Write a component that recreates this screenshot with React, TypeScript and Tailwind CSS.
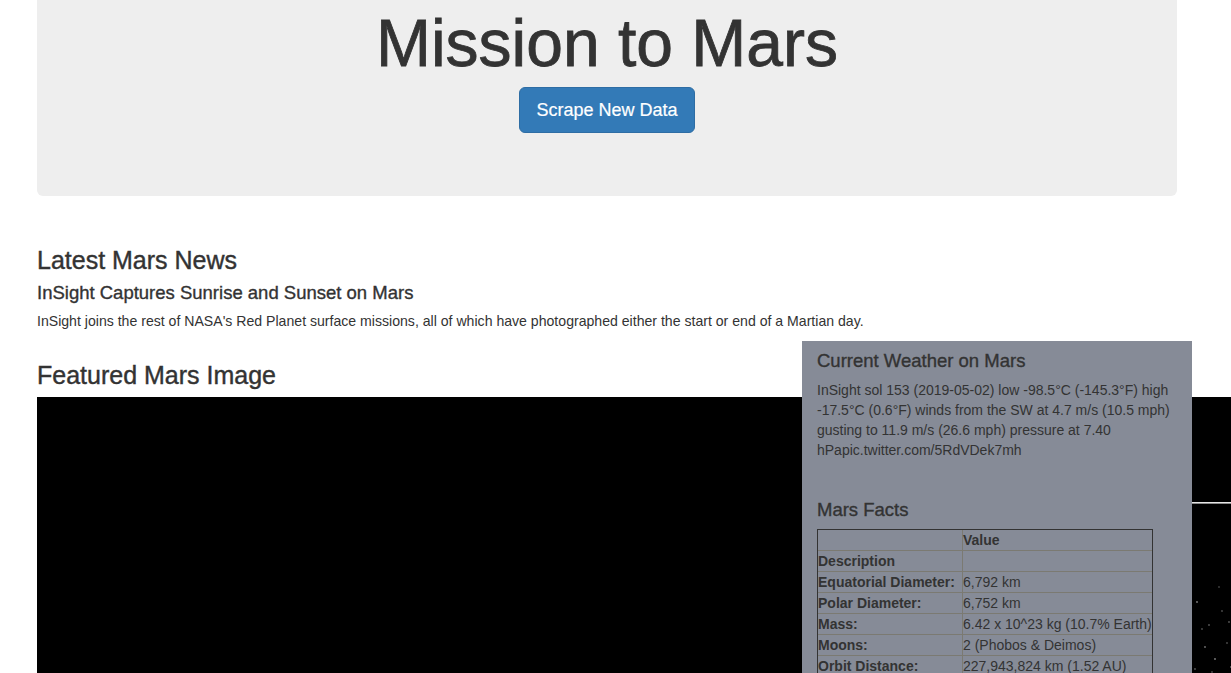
import React from 'react';

const facts: [string, string][] = [
  ['Description', ''],
  ['Equatorial Diameter:', '6,792 km'],
  ['Polar Diameter:', '6,752 km'],
  ['Mass:', '6.42 x 10^23 kg (10.7% Earth)'],
  ['Moons:', '2 (Phobos & Deimos)'],
  ['Orbit Distance:', '227,943,824 km (1.52 AU)'],
  ['Orbit Period:', '687 days (1.9 years)'],
];

// faint specks in the lower right of the featured image
const stars: [number, number, number][] = [
  [1160, 205, 0.5], [1172, 228, 0.35], [1185, 214, 0.3], [1168, 250, 0.45],
  [1190, 246, 0.3], [1178, 262, 0.5], [1158, 272, 0.35], [1194, 270, 0.4],
  [1182, 190, 0.25], [1165, 232, 0.3], [1175, 275, 0.3], [1192, 225, 0.35],
];

const FeaturedImage = () => (
  <svg width="1300" height="320" className="block" aria-label="Featured Mars Image">
    <rect x="0" y="0" width="1300" height="320" fill="#000" />
    <rect x="1100" y="105" width="200" height="1" fill="#e6e6e6" />
    <rect x="1100" y="106" width="200" height="1" fill="#8a8a8a" />
    {stars.map(([x, y, o], i) => (
      <circle key={i} cx={x} cy={y} r="0.9" fill="#fff" opacity={o} />
    ))}
  </svg>
);

export default function App() {
  return (
    <div className="h-[673px] overflow-hidden bg-white text-[#333] font-['Liberation_Sans',Helvetica,Arial,sans-serif]">
      <div className="ml-[37px] w-[1140px]">
        <div className="rounded-b-[6px] bg-[#eee] pb-[63px] text-center">
          <h1 className="pt-[7px] text-[66px] leading-[1.1] [-webkit-text-stroke:0.8px_#333]">Mission to Mars</h1>
          <div className="mt-[7px]">
            <button className="rounded-[6px] border border-[#2e6da4] bg-[#337ab7] px-[16px] pt-[11px] pb-[9px] text-[18px] leading-[1.3333] text-white [-webkit-text-stroke:0.2px_#fff]">
              Scrape New Data
            </button>
          </div>
        </div>

        <div className="mt-[51px]">
          <h2 className="text-[25px] leading-[1.1] [-webkit-text-stroke:0.4px_#333]">Latest Mars News</h2>
          <h3 className="mt-[9px] text-[18.5px] leading-[1.1] [-webkit-text-stroke:0.35px_#333]">InSight Captures Sunrise and Sunset on Mars</h3>
          <p className="mt-[8px] text-[14.1px] leading-[20px]">
            InSight joins the rest of NASA's Red Planet surface missions, all of which have photographed either the start or end of a Martian day.
          </p>
        </div>

        <div className="mx-[-15px] mt-[10px] flex">
          <div className="w-[780px] px-[15px]">
            <h2 className="mt-[21px] mb-[7px] text-[25px] leading-[1.1] [-webkit-text-stroke:0.4px_#333]">Featured Mars Image</h2>
            <FeaturedImage />
          </div>
          <div className="relative h-[400px] w-[390px] shrink-0 bg-[#868b97] px-[15px]">
            <h4 className="mt-[10px] mb-[8px] text-[18.5px] leading-[1.1] [-webkit-text-stroke:0.35px_#333]">Current Weather on Mars</h4>
            <p className="text-[14px] leading-[20px]">
              InSight sol 153 (2019-05-02) low -98.5°C (-145.3°F) high -17.5°C (0.6°F) winds from the SW at 4.7 m/s (10.5 mph) gusting to 11.9 m/s (26.6 mph) pressure at 7.40 hPapic.twitter.com/5RdVDek7mh
            </p>
            <h4 className="mt-[40px] mb-[9px] text-[18.5px] leading-[1.1] [-webkit-text-stroke:0.35px_#333]">Mars Facts</h4>
            <table className="border-separate border-spacing-0 border border-[#333] text-left text-[14px] leading-[20px]">
              <thead>
                <tr>
                  <th className="w-[145px] border-r border-b border-[#7b7a72] p-0"></th>
                  <th className="border-b border-[#7b7a72] p-0 font-bold">Value</th>
                </tr>
              </thead>
              <tbody>
                {facts.map(([k, v], i) => (
                  <tr key={k}>
                    <th className={`border-r border-[#7b7a72] p-0 font-bold ${i < facts.length - 1 ? 'border-b' : ''}`}>{k}</th>
                    <td className={`border-[#7b7a72] p-0 ${i < facts.length - 1 ? 'border-b' : ''}`}>{v}</td>
                  </tr>
                ))}
              </tbody>
            </table>
          </div>
        </div>
      </div>
    </div>
  );
}
